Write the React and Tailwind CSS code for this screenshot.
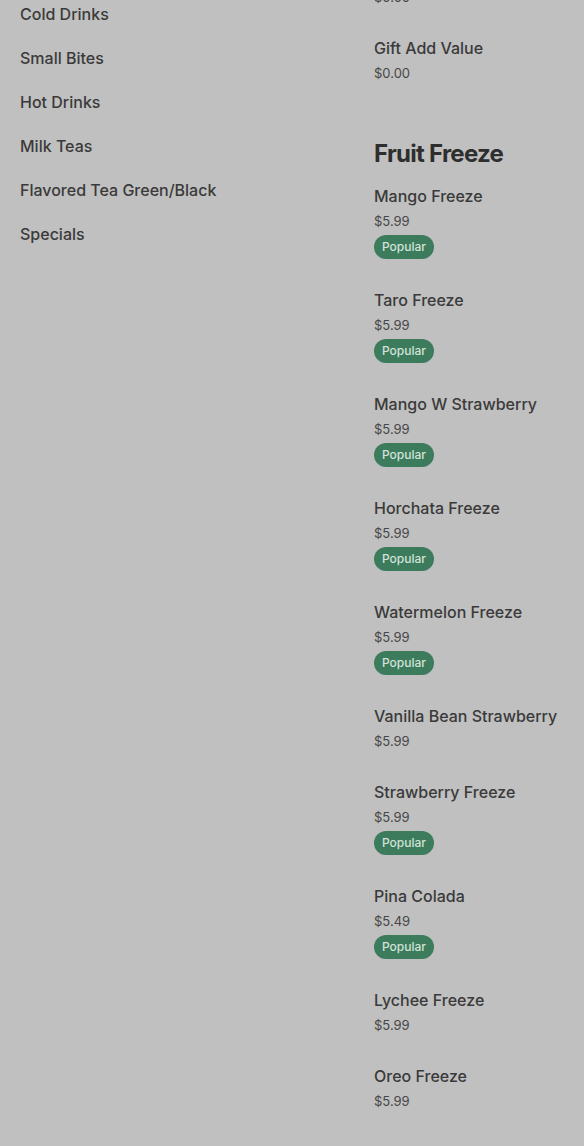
const categories = [
  'Cold Drinks',
  'Small Bites',
  'Hot Drinks',
  'Milk Teas',
  'Flavored Tea Green/Black',
  'Specials',
]

const fruitFreeze = [
  { name: 'Mango Freeze', price: '$5.99', popular: true },
  { name: 'Taro Freeze', price: '$5.99', popular: true },
  { name: 'Mango W Strawberry', price: '$5.99', popular: true },
  { name: 'Horchata Freeze', price: '$5.99', popular: true },
  { name: 'Watermelon Freeze', price: '$5.99', popular: true },
  { name: 'Vanilla Bean Strawberry', price: '$5.99', popular: false },
  { name: 'Strawberry Freeze', price: '$5.99', popular: true },
  { name: 'Pina Colada', price: '$5.49', popular: true },
  { name: 'Lychee Freeze', price: '$5.99', popular: false },
  { name: 'Oreo Freeze', price: '$5.99', popular: false },
  { name: 'Honeydew Freeze', price: '$5.99', popular: false },
]

function MenuItem({ name, price, popular }) {
  return (
    <div className="flex flex-col items-start pb-[29px]">
      <div className="text-[16px] leading-6 font-medium text-[#3a3a3a] whitespace-nowrap">{name}</div>
      <div className="mt-[3px] text-[13px] leading-5 text-[#474747]">{price}</div>
      {popular && (
        <span className="mt-1 h-6 px-2 inline-flex items-center rounded-full bg-[#3c7b5c] text-[12px] font-medium text-[#d3e3d9]">
          Popular
        </span>
      )}
    </div>
  )
}

export default function App() {
  return (
    <div
      className="h-[1146px] w-[584px] overflow-hidden bg-[#c0c0c0] flex"
      style={{ fontFamily: 'Inter, "Noto Sans", sans-serif' }}
    >
      <nav className="w-[374px] shrink-0 pl-5 pt-[2px] flex flex-col gap-5">
        {categories.map((c) => (
          <div key={c} className="text-[16px] leading-6 font-medium text-[#3a3a3a]">
            {c}
          </div>
        ))}
      </nav>

      <div className="flex-1 -mt-[40px] flex flex-col">
        <MenuItem name="Gift Card" price="$0.00" />
        <MenuItem name="Gift Add Value" price="$0.00" />

        <h2 className="mt-[26px] mb-[14px] text-[24px] leading-8 font-bold tracking-[-0.03em] text-[#2e2e2e]">
          Fruit Freeze
        </h2>
        {fruitFreeze.map((item) => (
          <MenuItem key={item.name} {...item} />
        ))}
      </div>
    </div>
  )
}
